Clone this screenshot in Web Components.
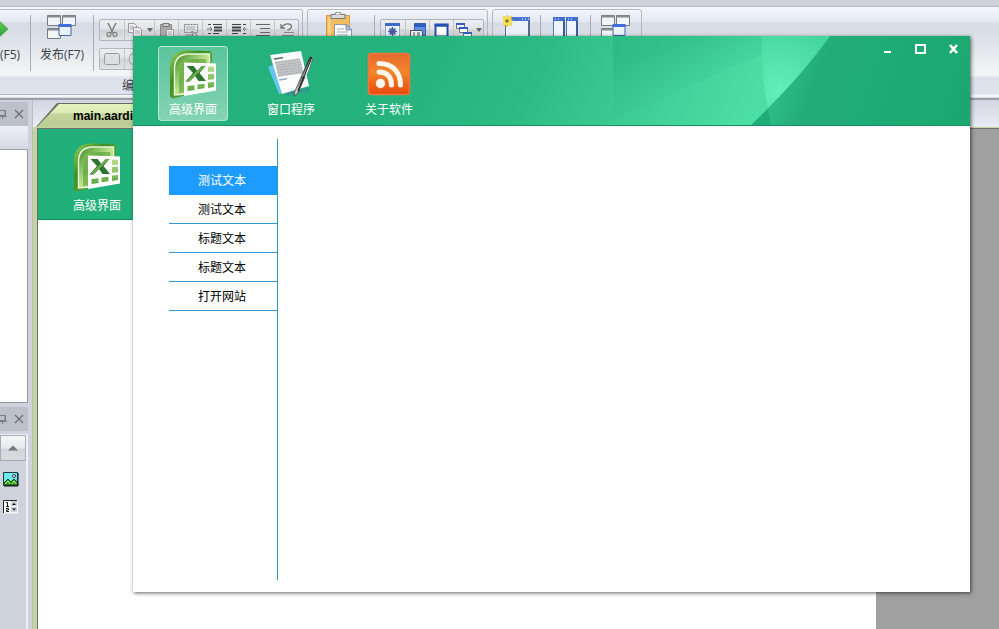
<!DOCTYPE html>
<html lang="zh-CN">
<head>
<meta charset="utf-8">
<title>main.aardio</title>
<style>
  html, body { margin: 0; height: 100%; overflow: hidden; }
  body { font: 12px/16px "Open Sans", "Noto Sans CJK SC", sans-serif; color: #3c4048; background: #cfd2dc; }
</style>
</head>
<body>
<ide-shell>
  <ide-ribbon slot="ribbon">
    <ribbon-group label="编辑" class="first">
      <big-button icon="play" label="(F5)" style="--w:24px"></big-button>
      <ribbon-sep></ribbon-sep>
      <big-button icon="windows" label="发布(F7)" style="--w:62px"></big-button>
      <ribbon-sep></ribbon-sep>
      <tool-rows>
        <tool-strip icons="cut,copy+,paste,select,indent,outdent,lines,undo"></tool-strip>
        <tool-strip icons="rect,rrect,rect,rect,rect,rect,rect,rect"></tool-strip>
      </tool-rows>
    </ribbon-group>
    <ribbon-group label="">
      <big-button icon="clipboard" label="" style="--w:66px"></big-button>
      <ribbon-sep></ribbon-sep>
      <tool-rows><tool-strip icons="gearwin,formwin,win,cascade+"></tool-strip></tool-rows>
    </ribbon-group>
    <ribbon-group label="">
      <big-button icon="newwin" label="" style="--w:47px"></big-button>
      <ribbon-sep></ribbon-sep>
      <big-button icon="splitwin" label="" style="--w:49px"></big-button>
      <ribbon-sep></ribbon-sep>
      <big-button icon="windows" label="" style="--w:50px"></big-button>
    </ribbon-group>
  </ide-ribbon>
  <dock-column slot="dock"></dock-column>
  <editor-area slot="editor" tab="main.aardio"></editor-area>
</ide-shell>

<app-window>
  <nav-button slot="nav" icon="excel" label="高级界面" active></nav-button>
  <nav-button slot="nav" icon="paper" label="窗口程序"></nav-button>
  <nav-button slot="nav" icon="rss" label="关于软件"></nav-button>
  <side-menu>
    <menu-row active>测试文本</menu-row>
    <menu-row>测试文本</menu-row>
    <menu-row>标题文本</menu-row>
    <menu-row>标题文本</menu-row>
    <menu-row>打开网站</menu-row>
  </side-menu>
</app-window>

<script>
const ICONS = {
  play: [10, 26, `<defs><linearGradient id="p" x2="0" y2="1"><stop stop-color="#6fd05c"/><stop offset="1" stop-color="#1c9a2c"/></linearGradient></defs><path d="M-5 3 8 15-5 27Z" fill="url(#p)" stroke="#2f9a35" stroke-width=".6"/>`],
  windows: [30, 26, `<g fill="#f3f4f6" stroke="#777b82"><path d="M.5 1.500h13v10H.5zM15.500 1.500h13v10h-13zM.5 14.500h13v10H.5z"/><path d="M.5 2.500h13M15.500 2.500h13M.5 15.500h13" stroke-width="2" stroke="#858990"/></g><path d="M12 11.500h12v10H12z" fill="#eaf3fc" stroke="#4b64a8"/><path d="M11.500 10h13v3h-13z" fill="#3f6fd8"/>`],
  clipboard: [28, 32, `<path d="M1.500 3.500h23v28h-23z" fill="#f2bd62" stroke="#d19b45"/><path d="M3 5h3v26H3z" fill="#f8cf85"/><path d="M6 2.500h14v4H6z" fill="#d8dade" stroke="#777"/><path d="M10 2.500a3 2.500 0 0 1 6 0" fill="#fff" stroke="#777"/><path d="M9.500 12.500h12l5 5V32h-17z" fill="#fff" stroke="#8f97a8"/><path d="m21 12 6 6h-6z" fill="#a9bedb" stroke="#7e92b5"/><path d="M12 17h7M12 20h11M12 23h11M12 26h11" stroke="#9aa7bb"/>`],
  newwin: [28, 26, `<path d="M2.500 4.500h24v24h-24z" fill="#eaf1f9" stroke="#5a6f95"/><path d="M2 3h25v4H2z" fill="#4677cf"/><path d="M19 5h1M22 5h1M25 5h1" stroke="#fff"/><path d="M25 7h2v20h-2z" fill="#596b8c"/><path d="m4 1 1.500 2 3-.5-.5 3 2 1.500-2 1.500.5 3-3-.5L4 13l-1.500-2-3 .5.5-3-2-1.500L0 5.500l-.5-3 3 .5z" fill="#ffe04d" stroke="#e2b93a" stroke-width=".5"/><path d="M4 5v4M2 7h4" stroke="#555"/>`],
  splitwin: [26, 26, `<path d="M.5 4h11v24H.5zM13.500 4h11v24h-11z" fill="#eef5fc" stroke="#5279bd"/><path d="M0 3h12v4H0zM13 3h12v4H13z" fill="#3f6fd0"/><path d="M2 5h1M5 5h1M15 5h1M18 5h1" stroke="#fff"/><path d="M10 7h2v20h-2zM23 7h2v20h-2z" fill="#405c9a"/>`],
  cut: [16, 16, `<path d="m4 1 5 10M12 1 7 11" stroke="#777" stroke-width="1.400"/><g fill="none" stroke="#888" stroke-width="1.300"><circle cx="5" cy="12.500" r="2"/><circle cx="11" cy="12.500" r="2"/></g>`],
  copy: [16, 16, `<g fill="#ececee" stroke="#999"><path d="M1.500 1.500h6l2 2v7h-8z"/><path d="M6.500 5.500h6l2 2v7h-8z"/></g><path d="M3 5h4M3 7h3M8 9h5M8 11h5" stroke="#aaa"/>`],
  paste: [16, 16, `<path d="M1.500 2.500h11v12h-11z" fill="#aaa" stroke="#888"/><path d="M4 1.500h6v3H4z" fill="#ccc" stroke="#777"/><path d="M7.500 7.500h7v8h-7z" fill="#eee" stroke="#999"/><path d="M9 10h4M9 12h4" stroke="#aaa"/>`],
  select: [16, 16, `<path d="M1.500 2.500h13v8h-13z" fill="none" stroke="#777" stroke-dasharray="2 1"/><path d="M3 5h9M3 7h9" stroke="#aaa"/><path d="M2 13h7m0-4 6 5-4 .5-1 1.500z" fill="#ccc" stroke="#888"/>`],
  indent: [16, 16, `<path d="M1 2.500h3M6 2.500h9M1 11.500h3M6 11.500h6M1 14.500h14" stroke="#444"/><path d="M7 5.500h8M7 8.500h8" stroke="#444" stroke-width="2"/><path d="M0 7h5M3 5l2 2-2 2" fill="none" stroke="#777"/>`],
  outdent: [16, 16, `<path d="M1 2.500h9M12 2.500h3M1 11.500h6M12 11.500h3M1 14.500h14" stroke="#444"/><path d="M1 5.500h9M1 8.500h9" stroke="#444" stroke-width="2"/><path d="M16 7h-4M14 5l-2 2 2 2" fill="none" stroke="#777"/>`],
  lines: [16, 16, `<path d="M1 2.500h14M5 6.500h10M5 10.500h10M1 13.500h14" stroke="#666"/>`],
  undo: [16, 16, `<path d="M2 2v4h4M2.500 5.500C5 1 12 .5 12.500 4.500c0 2-2 3-4 3.500" fill="none" stroke="#777" stroke-width="1.300"/><path d="M5 10.500h10M3 13.500h12" stroke="#888"/>`],
  rect: [18, 14, `<rect x="1.500" y="1.500" width="15" height="11" rx="2" fill="#dcdee2" stroke="#9a9ca2"/>`],
  rrect: [18, 14, `<rect x="1.500" y="1.500" width="15" height="11" rx="4" fill="#e5e6e9" stroke="#9a9ca2"/>`],
  gearwin: [16, 16, `<path d="M.5 1.500h14v14H.5z" fill="#edf2fa" stroke="#8fa6cf"/><path d="M0 1h15v3H0z" fill="#3d6bc9"/><circle cx="7.500" cy="9.500" r="3" fill="#5d6dbc"/><path d="M7.500 5v9M3 9.500h9M4.500 6.500l6 6M10.500 6.500l-6 6" stroke="#4a5aa6" stroke-width="1.500"/>`],
  formwin: [16, 16, `<path d="M4.500 1.500h11v12h-11z" fill="#5b92e3" stroke="#345fae"/><path d="M5 2h10v3H5z" fill="#2d5fc0"/><path d="M.5 8.500h12v7H.5z" fill="#eef0f5" stroke="#4d5564"/><path d="M3 11h2M7 11h3M3 13h2M7 13h3" stroke="#4d5564"/>`],
  win: [16, 16, `<path d="M1.500 3.500h12v11h-12z" fill="#fff" stroke="#2552a8" stroke-width="2"/><path d="M.5 1.500h14v3H.5z" fill="#2552b0"/>`],
  cascade: [16, 16, `<g fill="#fff" stroke="#6c7180"><path d="M.5 1.500h8v5h-8zM3.500 5.500h8v5h-8zM7.500 10.500h8v5h-8z"/></g><path d="M0 1h9v2H0zM3 5h9v2H3zM7 10h9v2H7z" fill="#2e5fbd"/>`],
  pin: [8, 10, `<path d="M-2 1.500h7v5h-7M0 7.500h7M5.500 1v6M2.500 7v3" fill="none" stroke="#7b7f88"/>`],
  close: [10, 10, `<path d="m1 1 8 8M9 1 1 9" stroke="#6b6f78" stroke-width="1.300"/>`],
  up: [10, 6, `<path d="M0 5.500 5 .5l5 5z" fill="#74777d"/>`],
  image: [16, 16, `<path d="M.5 1.500h14v13H.5z" fill="#6fe8ee" stroke="#1b3c3c"/><path d="m1 12 4-4 3 3 3-3 4 4v2H1z" fill="#2e9b32" stroke="#134f16"/><circle cx="11" cy="5" r="1.500" fill="#fff" stroke="#333"/><path d="M2 13l3-3 2 3M9 13l2-3 2 3" stroke="#bff05a" fill="none"/><path d="M15 2v13H1" stroke="#111" fill="none"/>`],
  spin: [16, 16, `<path d="M14.500 1v13H1" stroke="#fff" fill="none"/><path d="M1 1.500h13v12H1z" fill="#fff"/><path d="M.5 14V1.500H14" stroke="#222" fill="none"/><path d="M3 3.500h1.500V7M3 7.500h3M3 9.500h2.500v1.500H3.500v1.500H6" fill="none" stroke="#111"/><path d="M8 2h6v5H8zM8 8h6v5H8z" fill="#ccd0d8"/><path d="m9 6 2-2 2 2zM9 9.500l2 2 2-2z" fill="#111"/>`],
  min: [12, 10, `<path d="M2 7h7v2H2z" fill="#fff"/>`],
  max: [12, 10, `<path d="M1 1h9v8H1z" fill="none" stroke="#fff" stroke-width="2"/>`],
  x: [12, 10, `<path d="m2 1 7 8M9 1 2 9" stroke="#fff" stroke-width="2.600"/>`],
  excel: [48, 50, `<defs><linearGradient id="a" x2="1" y2="1"><stop stop-color="#9bd15f"/><stop offset=".35" stop-color="#3f8f26"/><stop offset="1" stop-color="#77b843"/></linearGradient><linearGradient id="b" x2="1" y2="1"><stop stop-color="#3d8a26"/><stop offset=".5" stop-color="#bfe58c"/><stop offset="1" stop-color="#57a12f"/></linearGradient><linearGradient id="c" x2="0" y2="1"><stop stop-color="#b9dc8c"/><stop offset="1" stop-color="#5fa63b"/></linearGradient></defs>
  <path d="M1 48V17C1 7 9 1.500 17 1.500L41 2l2 3v8l-25 33-14 3.500z" fill="url(#a)"/>
  <path d="M5.500 46V20C5.500 10 11 5 20 5h20.500v9L16 45z" fill="url(#b)" stroke="#e9f7d9" stroke-width="1.400"/>
  <path d="M10 44V22c0-8 4-12 11-12h16v8L16 43z" fill="url(#a)" opacity=".55"/>
  <path d="m15 13.500 32 1v27L15 47z" fill="#fff"/>
  <g fill="url(#c)"><path d="M39 17.500l6 .2v5l-6 .1zM39 25l6-.2v5.500l-6 .5zM39 33.500l6-.5v5l-6 1zM28.500 35.500l7-.8v4.500l-7 1zM18.500 37l7-.8v4.800l-7 1z"/></g>
  <path d="M17.500 17h7l4 5 4-5h4L30.500 24l6.500 8h-7.500l-3.500-5-5.500 5.500h-4l7.500-8.500z" fill="#2d7430"/><path d="M33 17H36.500L20.500 32.500h-4z" fill="#6aad4a"/>`],
  paper: [48, 48, `<defs><linearGradient id="d" x2="1"><stop stop-color="#eef1f3"/><stop offset=".4" stop-color="#777"/><stop offset="1" stop-color="#111"/></linearGradient></defs>
  <path d="m1 17 8-3 8 29-5 1z" fill="#61c5ee"/><path d="m18 42 23-4 1 3-22 5z" fill="#3d8ca0" opacity=".7"/><path d="m3 5 31-4 8 35-27 8z" fill="#fafbfb"/>
  <path d="m7 9 9-1.300" stroke="#666" stroke-width="1.500"/><path d="m8 13 25-3.500M9 15.500 34 12M9.500 18l25-3.500M10 20.500 35 17M10.500 23l25-3.500M11 25.500 36 22" stroke="#c2c4c6" stroke-width="2.600"/><path d="m8 13 25-3.500M9 15.500 34 12M9.500 18l25-3.500M10 20.500 35 17M10.500 23l25-3.500M11 25.500 36 22" stroke="#a9acaf" stroke-dasharray="2 1"/><path d="m12 30 8-1.300" stroke="#9aaad0" stroke-width="1.400"/>
  <path d="m46 8-3-1-15 34-1 5 4-3z" fill="url(#d)" stroke="#333" stroke-width=".7"/><path d="m44 8 2-1-5 15-3 5-2-1z" fill="#dfe4e6"/><path d="M45 7 31 41" stroke="#111"/>`],
  rss: [44, 44, `<defs><linearGradient id="e" x2="0" y2="1"><stop stop-color="#e4672f"/><stop offset=".45" stop-color="#f4862b"/><stop offset="1" stop-color="#e8490f"/></linearGradient></defs><rect x="1.500" y="1.500" width="41" height="41" rx="3" fill="url(#e)" stroke="#f4743b" stroke-width="1.500"/><circle cx="13.500" cy="31.500" r="4.700" fill="#fff5ea"/><g fill="none" stroke="#fff5ea" stroke-width="5" stroke-linecap="round"><path d="M12 20c8 0 12.500 5 12.500 13"/><path d="M12 11.500c13 0 21.500 8 21.500 21.500"/></g>`]
};
const svg = n => { const [w, h, b] = ICONS[n]; return `<svg width="${w}" height="${h}" viewBox="0 0 ${w} ${h}" aria-hidden="true">${b}</svg>`; };
const RESET = `:host,*{box-sizing:border-box}svg{display:block;flex:none}button{font:inherit;color:inherit;background:none;border:0;padding:0;margin:0}`;
const define = (name, render) => customElements.define(name, class extends HTMLElement {
  constructor() { super(); this.attachShadow({ mode: 'open' }); }
  connectedCallback() { this.shadowRoot.innerHTML = `<style>${RESET}</style>` + render(this); }
});

define('ide-shell', () => `<style>
  :host{display:flex;flex-direction:column;height:100vh;overflow:hidden}
  .title{height:6px;flex:none;background:#ced1dc}
  .work{flex:1;display:flex;min-height:0}
  ::slotted([slot=editor]){flex:1;min-width:0}
</style><div class="title"></div><slot name="ribbon"></slot><div class="work"><slot name="dock"></slot><slot name="editor"></slot></div>`);

define('ide-ribbon', () => `<style>
  :host{display:flex;gap:4px;height:94px;flex:none;padding-top:2px;border-top:1px solid #b6b8bb;border-bottom:2px solid #9c9eaa;
  background:linear-gradient(#f4f7fb 0,#e3e7f1 15px,#d7dbe6 16px,#d9dde6 24px,#f2f6f5 68px,#dce0eb 71px,#e0e4ee 87px,#fff 89px,#d0d3dd 91px)}
</style><slot></slot>`);

define('ribbon-group', el => `<style>
  :host{display:flex;flex-direction:column;height:86px;border:1px solid #b4b7bf;border-radius:3px;box-shadow:inset 0 1px #f8fafc}
  :host(.first){border-left:0;border-top-left-radius:0;border-bottom-left-radius:0}
  .body{display:flex;flex:1;padding-right:3px}
  :host([label=""]:last-of-type) .body{padding-right:0}
  :host(.first) .body{padding-left:6px}
  .cap{text-align:center;height:16px;padding-right:34px}
</style><div class="body"><slot></slot></div><div class="cap">${el.getAttribute('label')}</div>`);

define('ribbon-sep', () => `<style>:host{display:block;flex:none;width:1px;height:56px;margin-top:5px;background:#a9abb2}</style>`);

define('big-button', el => `<style>
  :host{display:block;width:var(--w);flex:none}
  button{display:flex;flex-direction:column;align-items:center;width:100%;padding-top:4px;gap:7px;white-space:nowrap}
  :host([icon=play]){margin-left:-6px;margin-right:6px}
  :host([icon=play]) button{align-items:flex-start}
  :host([icon=clipboard]) button{padding:2px 4px 0 0}
</style><button aria-label="${el.getAttribute('label') || el.getAttribute('icon')}">${svg(el.getAttribute('icon'))}<span>${el.getAttribute('label')}</span></button>`);

define('tool-rows', () => `<style>:host{display:flex;flex-direction:column;gap:7px;padding:9px 0 0 5px}</style><slot></slot>`);

define('tool-strip', el => `<style>
  :host{display:flex;height:22px;border:1px solid #b3b5bb;border-radius:2px;background:linear-gradient(#eceef2 0,#e2e4e8 9px,#cfd1d5 10px,#e2e3e5)}
  button{display:flex;align-items:center;justify-content:center;gap:4px;width:24px}
  button+button{border-left:1px solid #c3c5ca}
  button.drop{width:30px}
  i{border:3px solid transparent;border-top:4px solid #666;border-bottom:0}
</style>${el.getAttribute('icons').split(',').map(n => { const d = n.endsWith('+'); n = n.replace('+', ''); return `<button aria-label="${n}"${d ? ' class="drop"' : ''}>${svg(n)}${d ? '<i></i>' : ''}</button>`; }).join('')}`);

define('dock-column', () => `<style>
  :host{display:flex;flex-direction:column;width:33px;flex:none;padding:2px 4px 0 0;background:#cfd2dd;border-right:1px solid #b9bcc7}
  header{display:flex;align-items:center;justify-content:space-between;height:24px;flex:none;padding-right:4px;background:#bcc0cb}
  .bar{height:24px;flex:none;background:linear-gradient(#edf0f7,#d5d9e4);border-bottom:1px solid #a0a3ac}
  .list{height:253px;flex:none;background:#fff;border-right:1px solid #94979f;border-bottom:1px solid #94979f;margin-bottom:4px}
  .tools{flex:1;display:flex;flex-direction:column;align-items:flex-start;gap:12px;margin-top:3px;background:#cfd3dd;border:1px solid #eef0f5;border-width:1px 2px 0 0}
  .tools button{padding-left:3px}
  .tools button.up{display:flex;align-items:center;justify-content:center;width:100%;height:26px;padding:0;margin-bottom:-2px;border:1px solid #a9acb4;background:linear-gradient(#f6f6f7 0,#e8e9eb 12px,#d3d5da 13px,#dadce0)}
</style>
<header><button aria-label="pin">${svg('pin')}</button><button aria-label="close">${svg('close')}</button></header>
<div class="bar"></div><div class="list"></div>
<header><button aria-label="pin">${svg('pin')}</button><button aria-label="close">${svg('close')}</button></header>
<div class="tools"><button class="up" aria-label="up">${svg('up')}</button><button aria-label="picture">${svg('image')}</button><button aria-label="spin">${svg('spin')}</button></div>`);

define('editor-area', el => `<style>
  :host{display:flex;flex-direction:column}
  .tabs{height:27px;flex:none;display:flex;padding:3px 0 0 3px;background:linear-gradient(#d3d6e1,#e9ecf4)}
  .tab{display:flex;align-items:center;width:150px;padding-left:36px;font-family:"Liberation Sans",sans-serif;font-weight:700;color:#000;background:linear-gradient(#e6f5bf 0,#daeab2 9px,#c3d59a 10px,#bccd95);clip-path:polygon(0 100%,22px 0,100% 0,100% 100%)}
  .edge{display:flex;background:#6c6d61;clip-path:polygon(0 100%,21px 0,100% 0,100% 100%);padding:1px 0 0 1px}
  .page{flex:1;border:solid #c3d59a;border-width:1px 0 0 4px;display:flex}
  .canvas{flex:1;border:solid #6d6e70;border-width:1px 0 0 1px;background:#a0a0a0;display:flex}
  .form{flex:1;margin-right:123px;background:#fff}
  .head{height:91px;background:#22b07a;border-bottom:1px solid #16905f;padding:10px 0 0 24px}
</style>
<div class="tabs"><div class="edge"><button class="tab">${el.getAttribute('tab')}</button></div></div>
<div class="page"><div class="canvas"><div class="form"><div class="head"><nav-button icon="excel" label="高级界面" roomy></nav-button></div></div></div></div>`);

define('nav-button', el => `<style>
  :host{display:block;flex:none;width:70px;font-family:"Liberation Sans","Noto Sans CJK SC",sans-serif;color:#fff}
  button{display:flex;flex-direction:column;align-items:center;width:100%;height:75px;padding:2px 0 0;gap:3px;border:1px solid transparent;border-radius:4px}
  .pic{height:50px;display:flex;align-items:center}
  :host([roomy]) button{gap:6px}
  :host([active]) button{background:linear-gradient(#ffffff40,#ffffff70);border-color:#ffffff80}
</style><button><span class="pic">${svg(el.getAttribute('icon'))}</span><span>${el.getAttribute('label')}</span></button>`);

define('app-window', () => `<style>
  :host{position:absolute;inset:36px 29px 37px 133px;display:flex;flex-direction:column;background:#fff;box-shadow:1px 1px 4px #000000a0;font-family:"Liberation Sans","Noto Sans CJK SC",sans-serif}
  header{display:grid;flex:none;height:90px;background:#22b07a;border-bottom:1px solid #168f62;overflow:hidden}
  header>*{grid-area:1/1}
  .art{width:100%;height:90px}
  nav{display:flex;gap:28px;padding:10px 0 0 25px}
  .ctl{display:flex;justify-self:end;align-self:start}
  .ctl button{display:flex;align-items:center;justify-content:center;width:33px;height:26px}
  main{flex:1;display:flex;padding:13px 0 12px 36px}
</style>
<header>
<svg class="art" viewBox="0 0 837 90" preserveAspectRatio="xMaxYMid slice" aria-hidden="true"><defs>
 <linearGradient id="l" gradientUnits="userSpaceOnUse" x1="250" y1="0" x2="580" y2="150"><stop stop-color="#24b17b"/><stop offset=".4" stop-color="#2cba83"/><stop offset="1" stop-color="#4bdfa3"/></linearGradient>
 <linearGradient id="m" gradientUnits="userSpaceOnUse" x1="560" y1="0" x2="575" y2="44"><stop stop-color="#25b07c" stop-opacity=".45"/><stop offset="1" stop-color="#30bd87" stop-opacity=".12"/></linearGradient>
 <radialGradient id="g" gradientUnits="userSpaceOnUse" cx="645" cy="54" r="65"><stop stop-color="#62efb9"/><stop offset="1" stop-color="#44d79c"/></radialGradient>
 <linearGradient id="r" gradientUnits="userSpaceOnUse" x1="630" y1="0" x2="837" y2="70"><stop stop-color="#38c78f"/><stop offset=".3" stop-color="#22ad78"/><stop offset="1" stop-color="#1aa870"/></linearGradient></defs>
 <path d="M0 0h837v90H0z" fill="url(#l)"/><path d="M480 0h150v18L480 84z" fill="url(#m)"/>
 <path d="M697 0Q662 48 617 90H837V0z" fill="#20ac77"/>
 <path d="M697 0Q667 41 635 72l3 18H837V0z" fill="url(#r)"/>
 <path d="M629 0q-1 40 6 72Q667 41 697 0z" fill="url(#g)"/></svg>
<nav><slot name="nav"></slot></nav>
<div class="ctl"><button aria-label="最小化">${svg('min')}</button><button aria-label="最大化">${svg('max')}</button><button aria-label="关闭">${svg('x')}</button></div>
</header><main><slot></slot></main>`);

define('side-menu', () => `<style>:host{display:block;width:109px;padding-top:27px;border-right:1px solid #2f9bb0}</style><slot></slot>`);

define('menu-row', () => `<style>
  :host{display:block;height:29px;color:#000;border-bottom:1px solid #3596dc}
  button{width:100%;height:28px;line-height:30px;padding-right:2px}
  :host([active]){background:#1e9bff;border-color:#1e9bff;color:#fff}
</style><button><slot></slot></button>`);
</script>
</body>
</html>
